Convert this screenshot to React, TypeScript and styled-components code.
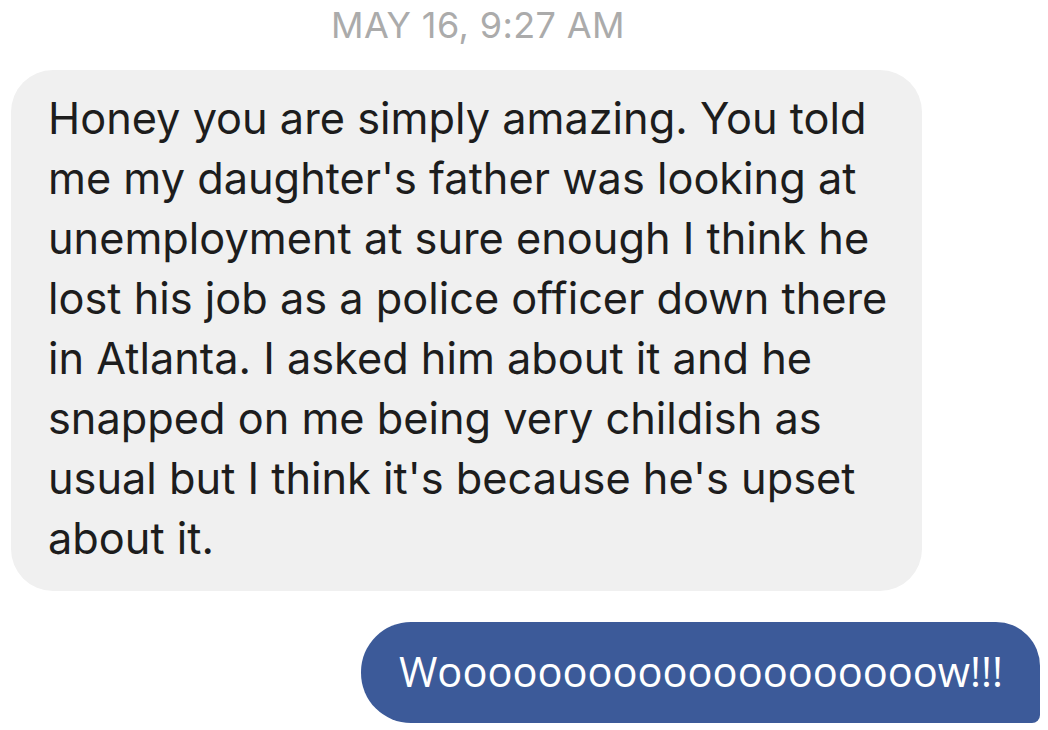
import React from "react";
import styled, { createGlobalStyle } from "styled-components";

const Global = createGlobalStyle`
  html, body { margin: 0; padding: 0; background: #ffffff; }
  body { width: 1048px; height: 730px; overflow: hidden; }
`;

const Thread = styled.div`
  display: flex;
  flex-direction: column;
  width: 1048px;
`;

const Stamp = styled.div`
  width: 956px;
  text-align: center;
  padding-top: 5px;
  height: 70px;
  box-sizing: border-box;
  font-family: Inter, "Liberation Sans", sans-serif;
  font-size: 36px;
  line-height: 40px;
  color: #ababab;
  letter-spacing: 0.4px;
`;

const Row = styled.div<{ $out?: boolean }>`
  display: flex;
  justify-content: ${(p) => (p.$out ? "flex-end" : "flex-start")};
  padding: ${(p) => (p.$out ? "0 8px 0 0" : "0 0 0 11px")};
  margin-bottom: ${(p) => (p.$out ? "0" : "31px")};
`;

const InBubble = styled.div`
  width: 911px;
  box-sizing: border-box;
  background: #f0f0f0;
  border-radius: 42px;
  padding: 18px 0 23px 37px;
  font-family: Inter, "Liberation Sans", sans-serif;
  font-size: 43.3px;
  line-height: 60px;
  color: #1d1d1d;
`;

const Line = styled.div`
  white-space: nowrap;
`;

const OutBubble = styled.div`
  height: 101px;
  box-sizing: border-box;
  display: flex;
  align-items: center;
  background: #3c5a99;
  border-radius: 50px 44px 8px 50px;
  padding: 0 37px 4px 38px;
  font-family: "Open Sans", "Liberation Sans", sans-serif;
  font-size: 41.6px;
  color: #ffffff;
  white-space: nowrap;
`;

const lines = [
  "Honey you are simply amazing. You told",
  "me my daughter's father was looking at",
  "unemployment at sure enough I think he",
  "lost his job as a police officer down there",
  "in Atlanta. I asked him about it and he",
  "snapped on me being very childish as",
  "usual but I think it's because he's upset",
  "about it.",
];

export default function App() {
  return (
    <>
      <Global />
      <Thread>
        <Stamp>MAY 16, 9:27 AM</Stamp>
        <Row>
          <InBubble>
            {lines.map((l, i) => (
              <Line key={i}>{l}</Line>
            ))}
          </InBubble>
        </Row>
        <Row $out>
          <OutBubble>Woooooooooooooooooooow!!!</OutBubble>
        </Row>
      </Thread>
    </>
  );
}
